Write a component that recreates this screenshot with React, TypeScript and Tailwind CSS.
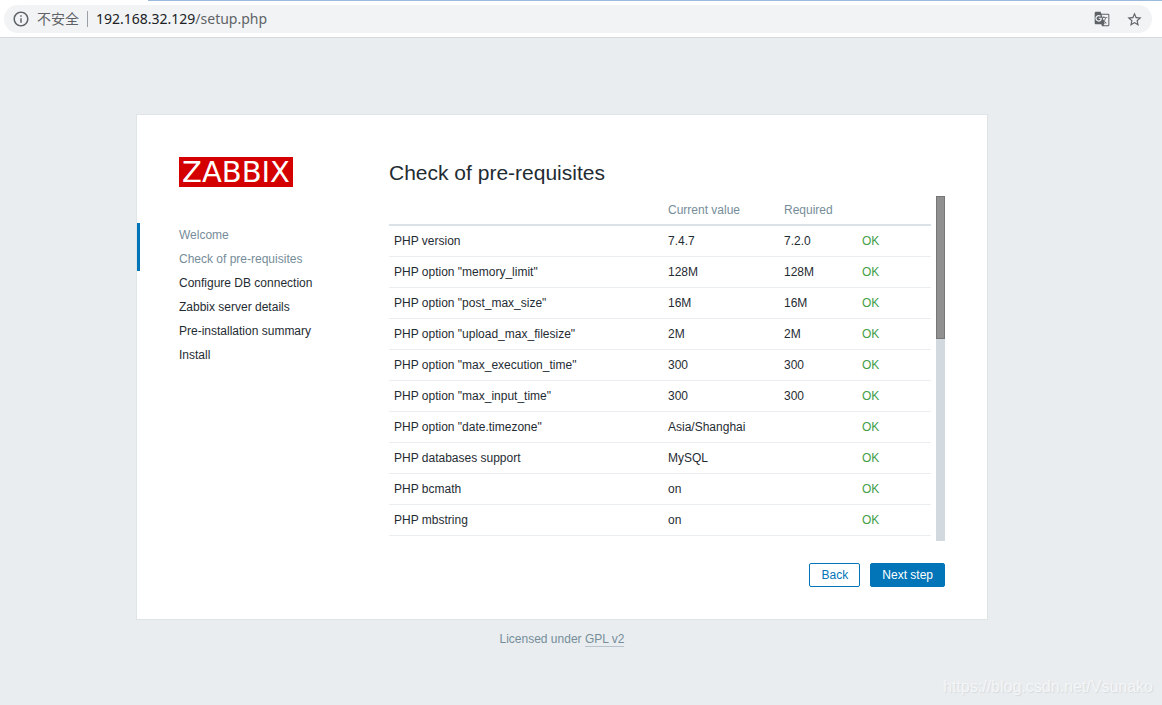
import { MdGTranslate, MdInfoOutline, MdStarBorder } from "react-icons/md";

const steps = [
  { label: "Welcome", done: true },
  { label: "Check of pre-requisites", done: true },
  { label: "Configure DB connection", done: false },
  { label: "Zabbix server details", done: false },
  { label: "Pre-installation summary", done: false },
  { label: "Install", done: false },
];

const checks = [
  { name: "PHP version", current: "7.4.7", required: "7.2.0" },
  { name: 'PHP option "memory_limit"', current: "128M", required: "128M" },
  { name: 'PHP option "post_max_size"', current: "16M", required: "16M" },
  { name: 'PHP option "upload_max_filesize"', current: "2M", required: "2M" },
  { name: 'PHP option "max_execution_time"', current: "300", required: "300" },
  { name: 'PHP option "max_input_time"', current: "300", required: "300" },
  { name: 'PHP option "date.timezone"', current: "Asia/Shanghai", required: "" },
  { name: "PHP databases support", current: "MySQL", required: "" },
  { name: "PHP bcmath", current: "on", required: "" },
  { name: "PHP mbstring", current: "on", required: "" },
];

function AddressBar() {
  return (
    <header className="relative border-b border-[#d5d9dc] bg-white pt-[5px] pr-[10px] pb-1 pl-1">
      <div className="absolute top-0 right-0 left-[148px] h-px bg-[#9db9de]" />
      <div className="flex h-7 items-center rounded-full bg-[#f1f3f4] pr-[9px] pl-2 text-[#5f6368]">
        <button type="button" aria-label="Site information" className="flex">
          <MdInfoOutline className="h-[18px] w-[18px]" />
        </button>
        <span className="ml-[7px] pb-0.5 font-['Noto_Sans_CJK_SC',sans-serif] text-[14px] leading-5">
          不安全
        </span>
        <span className="mx-2 h-4 w-px bg-[#9aa0a6]" />
        <div className="flex-1 font-['Noto_Sans','Open_Sans',sans-serif] text-[14px] leading-5">
          <span className="text-[#202124]">192.168.32.129</span>/setup.php
        </div>
        <button type="button" aria-label="Translate this page" className="mr-4 flex">
          <MdGTranslate className="h-4 w-4" />
        </button>
        <button type="button" aria-label="Bookmark this page" className="flex">
          <MdStarBorder className="h-[17px] w-[17px]" />
        </button>
      </div>
    </header>
  );
}

function StepList() {
  return (
    <nav className="w-[252px] shrink-0 pt-[42px]">
      <div className="ml-[42px] flex h-[30px] w-[114px] items-center justify-center bg-[#d40000] font-['DejaVu_Sans',sans-serif] text-[29px] leading-8 text-white">
        ZABBIX
      </div>
      <ul className="mt-9">
        {steps.map((s) => (
          <li
            key={s.label}
            className={
              s.done
                ? "border-l-[3px] border-[#0275b8] pl-[39px] leading-6 text-[#768d99]"
                : "border-l-[3px] border-transparent pl-[39px] leading-6"
            }
          >
            {s.label}
          </li>
        ))}
      </ul>
    </nav>
  );
}

function CheckTable() {
  return (
    <div className="flex h-[345px] gap-[5px] overflow-hidden">
      <div className="flex-1">
        <table className="w-full table-fixed border-separate border-spacing-0 text-left">
          <colgroup>
            <col />
            <col className="w-[116px]" />
            <col className="w-[78px]" />
            <col className="w-[74px]" />
          </colgroup>
          <thead>
            <tr className="h-[30px] text-[#768d99] [&>th]:border-b-2 [&>th]:border-[#dce2e5] [&>th]:px-[5px] [&>th]:font-normal">
              <th />
              <th>Current value</th>
              <th>Required</th>
              <th />
            </tr>
          </thead>
          <tbody>
            {checks.map((c) => (
              <tr
                key={c.name}
                className="h-[31px] [&>td]:border-b [&>td]:border-[#ebeef0] [&>td]:px-[5px]"
              >
                <td>{c.name}</td>
                <td>{c.current}</td>
                <td>{c.required}</td>
                <td className="text-[#429e47]">OK</td>
              </tr>
            ))}
          </tbody>
        </table>
      </div>
      {/* Scrollbar */}
      <div className="w-[9px] bg-[#d2d9df]">
        <div className="h-[143px] border border-[#767676] bg-[#909090]" />
      </div>
    </div>
  );
}

export default function App() {
  return (
    <div className="flex min-h-screen flex-col bg-[#e9edf0] font-['Liberation_Sans',Arial,sans-serif] text-[12px] leading-[14px] text-[#1f2c33]">
      <AddressBar />
      <main className="flex-1 pt-[76px] pr-[38px]">
        <div className="mx-auto flex max-w-[852px] border border-[#dfe4e7] bg-white">
          <StepList />
          <form className="flex-1 pt-[42px] pr-[42px] pb-8" onSubmit={(e) => e.preventDefault()}>
            <h1 className="mb-[7px] text-[21px] leading-8">Check of pre-requisites</h1>
            <CheckTable />
            <div className="mt-[22px] flex justify-end gap-2.5">
              <button
                type="button"
                className="h-6 min-w-[51px] rounded-[2px] border border-[#0275b8] bg-white px-[11px] text-[#0275b8]"
              >
                Back
              </button>
              <button
                type="submit"
                className="h-6 rounded-[2px] border border-[#0275b8] bg-[#0275b8] px-[11px] text-white"
              >
                Next step
              </button>
            </div>
          </form>
        </div>
        <p className="mt-3 text-center text-[#768d99]">
          Licensed under{" "}
          <a href="#" className="border-b border-[#b7c4cb]">
            GPL v2
          </a>
        </p>
      </main>
      <footer className="pr-[9px] pb-[9px] text-right text-[16px] leading-[18px] text-[#f4f6f7] [text-shadow:1px_1px_1px_#d6dadd]">
        https://blog.csdn.net/Vsunako
      </footer>
    </div>
  );
}
